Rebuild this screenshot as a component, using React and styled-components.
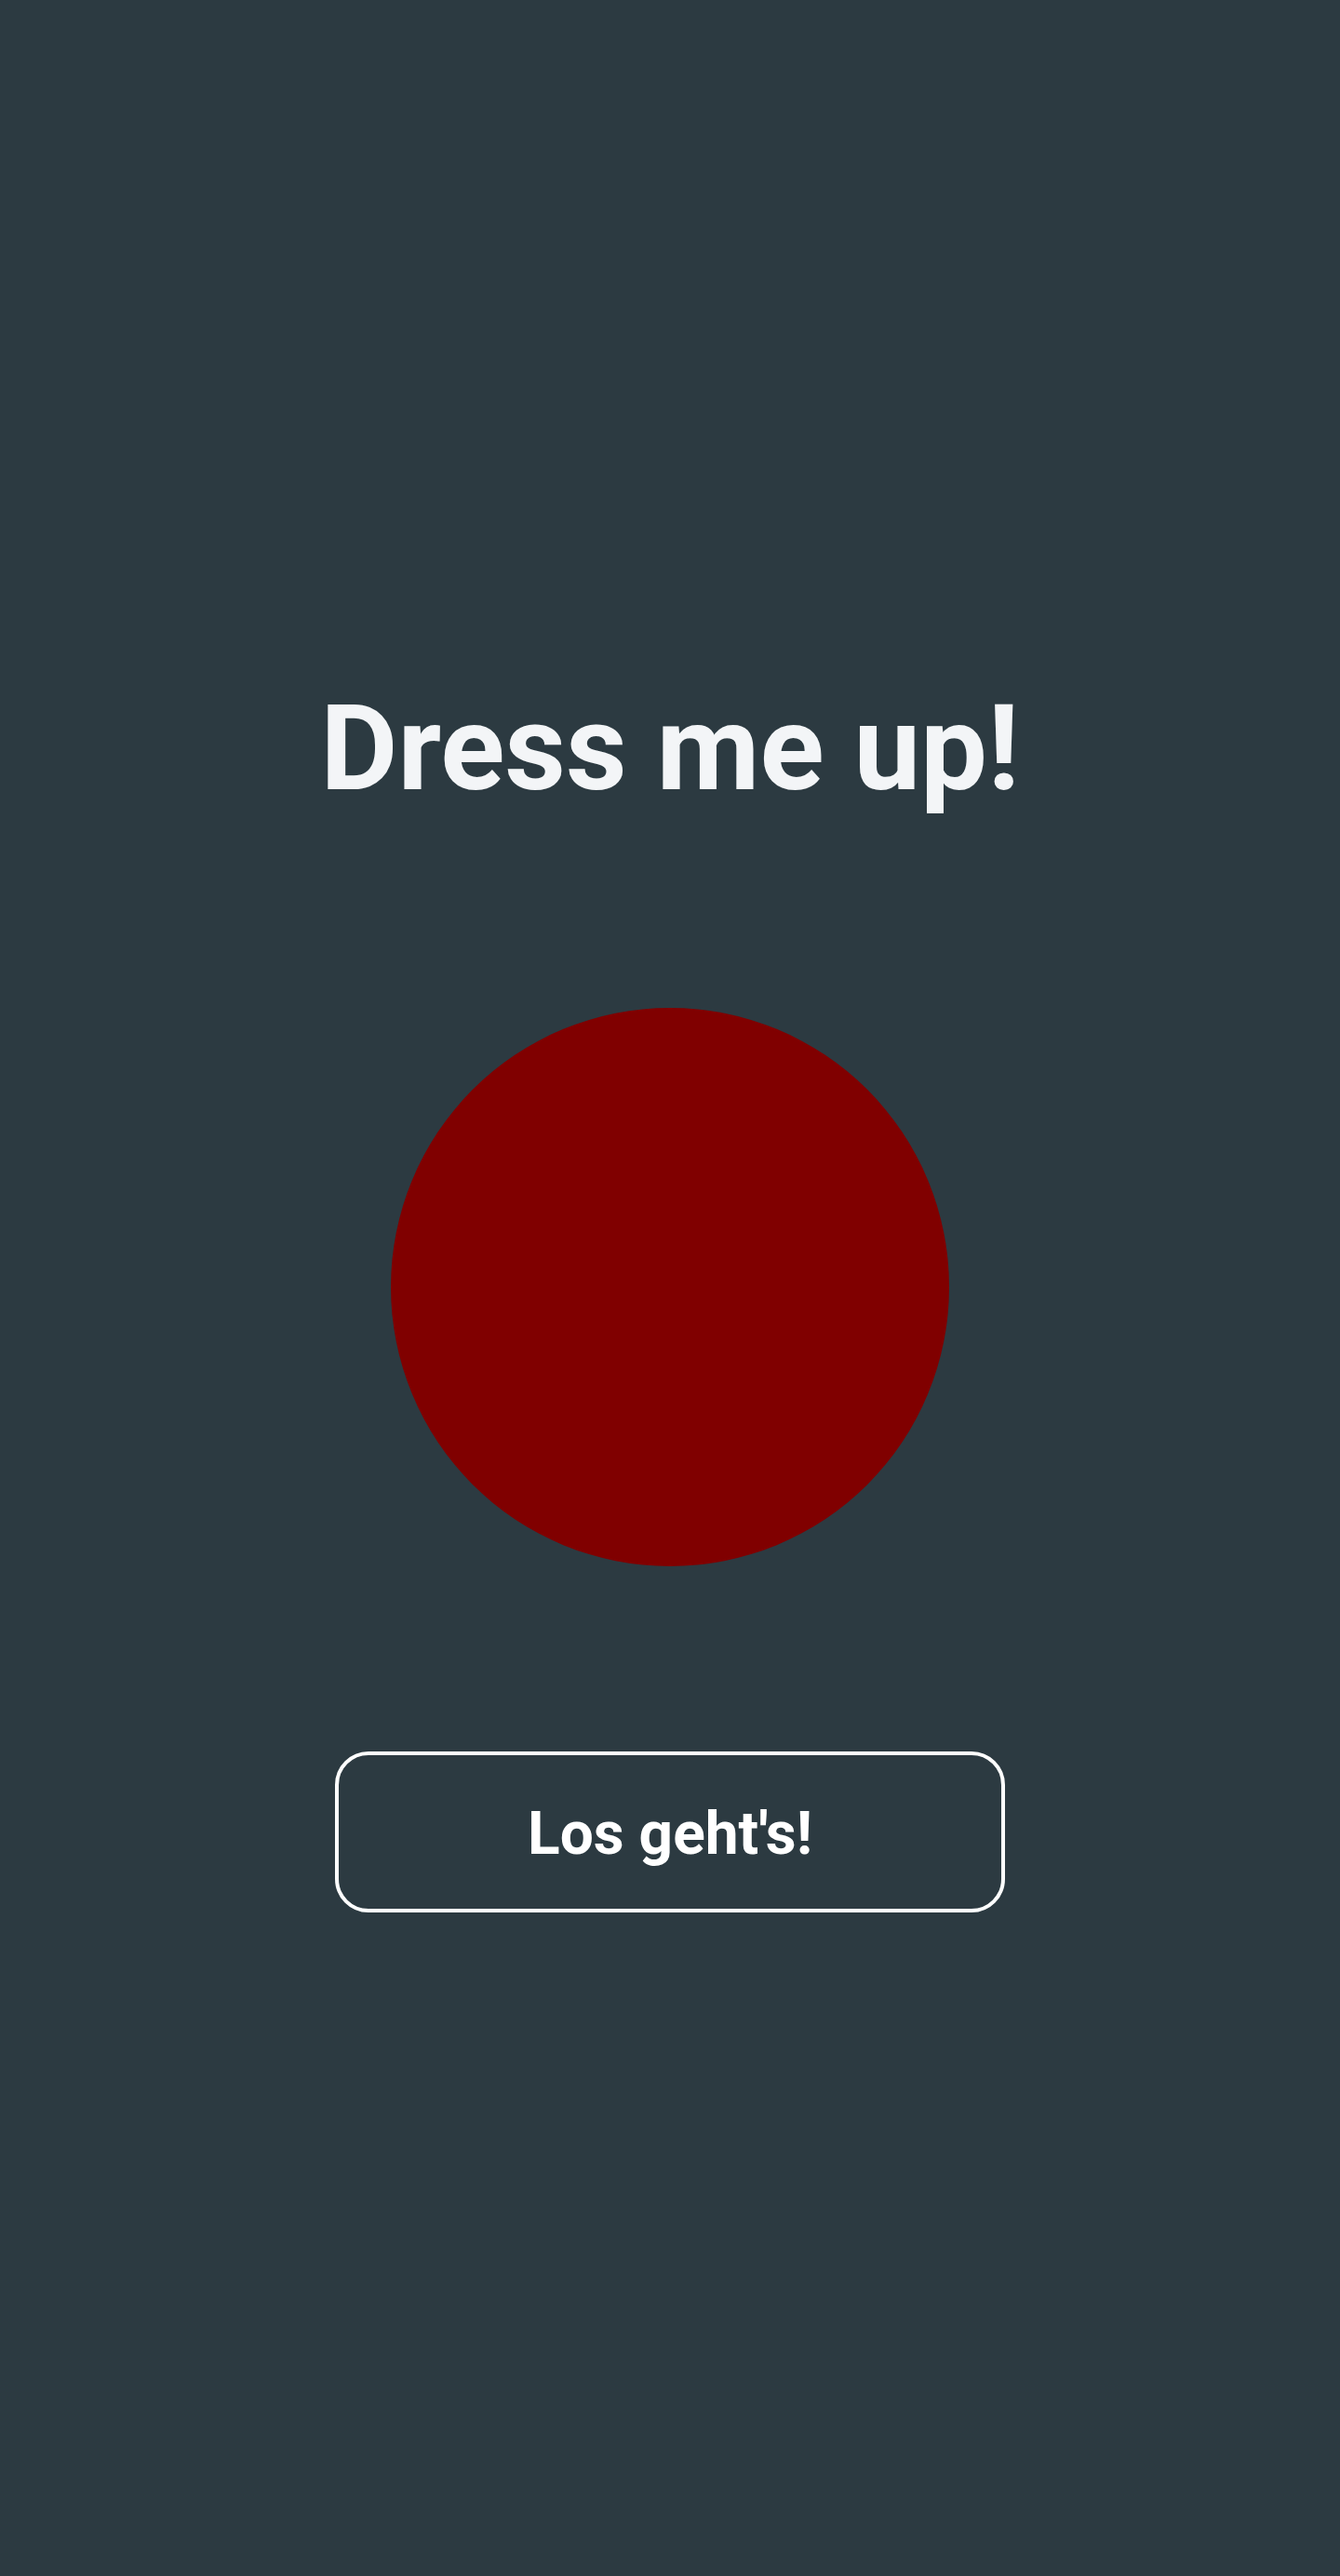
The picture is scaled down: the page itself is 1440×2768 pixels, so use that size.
import React from "react";
import styled, { createGlobalStyle } from "styled-components";

const GlobalStyle = createGlobalStyle`
  html, body {
    margin: 0;
    padding: 0;
    background-color: #2c3a41;
  }
  body {
    font-family: Roboto, "Liberation Sans", sans-serif;
  }
`;

const Page = styled.main`
  min-height: 2768px;
  box-sizing: border-box;
  display: flex;
  flex-direction: column;
  align-items: center;
  padding-top: 729px;
  background-color: #2c3a41;
`;

const Title = styled.h1`
  margin: 0;
  font-family: Roboto, "Liberation Sans", sans-serif;
  font-weight: 700;
  font-size: 128px;
  line-height: 150px;
  color: #f3f5f7;
  text-align: center;
`;

const Dress = styled.div`
  width: 600px;
  height: 600px;
  margin-top: 204px;
  border-radius: 50%;
  background-color: ${props => props.color};
`;

const StartButton = styled.button`
  display: flex;
  align-items: center;
  justify-content: center;
  box-sizing: border-box;
  width: 720px;
  height: 173px;
  margin-top: 199px;
  padding: 3px 0 0;
  background: transparent;
  border: 4px solid #ffffff;
  border-radius: 36px;
  color: #ffffff;
  font-family: Roboto, "Liberation Sans", sans-serif;
  font-weight: 700;
  font-size: 64px;
  cursor: pointer;
`;

export default function App() {
  return (
    <>
      <GlobalStyle />
      <Page>
        <Title>Dress me up!</Title>
        <Dress color="#800000" />
        <StartButton>Los geht's!</StartButton>
      </Page>
    </>
  );
}
